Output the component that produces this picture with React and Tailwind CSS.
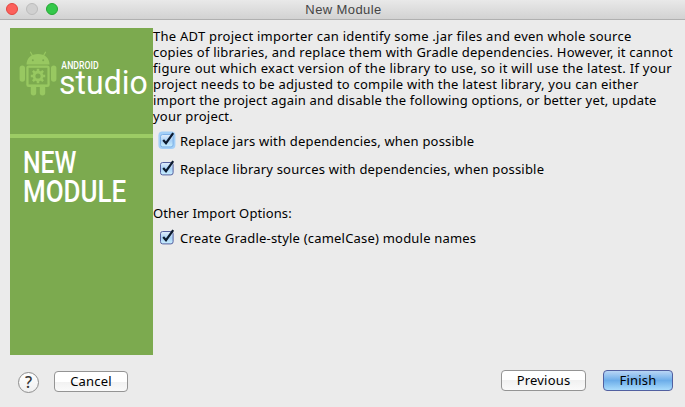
const CheckBox = ({ focused }) => (
  <svg width="17" height="17" viewBox="0 0 17 17" className="block shrink-0 overflow-visible">
    <defs>
      <linearGradient id="cb" x1="0" y1="0" x2="0" y2="1">
        <stop offset="0" stopColor="#e3eefb" />
        <stop offset="0.5" stopColor="#a9d0f5" />
        <stop offset="1" stopColor="#c9f0ff" />
      </linearGradient>
    </defs>
    {focused && <rect x="-0.6" y="-0.4" width="17" height="17.4" rx="4" fill="#a3cff7" />}
    <rect x="1.5" y="2.5" width="12.6" height="12.4" rx="2.2" fill="url(#cb)" stroke={focused ? "#7db0e6" : "#56609f"} />
    <path d="M4.2 8 L7 11.2 L14.2 1.2" fill="none" stroke="#0c1a2e" strokeWidth="2.2" />
  </svg>
);

const Option = ({ focused, className, children }) => (
  <label className="flex h-[17px] items-center pl-[6px]">
    <CheckBox focused={focused} />
    <span className={"ml-[4px] whitespace-nowrap leading-[16px] " + className}>{children}</span>
  </label>
);

const Robot = () => (
  <svg width="38" height="46" viewBox="0 0 38 46" className="block shrink-0" fill="#98c861">
    <path d="M11.5 1.2 L14 5.5 M26.5 1.2 L24 5.5" stroke="#98c861" strokeWidth="1.2" strokeLinecap="round" />
    <path d="M7.5 13.6 C7.5 7 12.5 3 19 3 S30.5 7 30.5 13.6 Z" />
    <circle cx="13.8" cy="9.2" r="1" fill="#7caa4f" />
    <circle cx="24.2" cy="9.2" r="1" fill="#7caa4f" />
    <rect x="0.6" y="14.4" width="5.4" height="16.3" rx="2.7" />
    <rect x="32" y="14.4" width="5.4" height="16.3" rx="2.7" />
    <rect x="7.3" y="14.6" width="23.4" height="21.4" rx="2.2" />
    <rect x="11.8" y="32" width="5.4" height="12.4" rx="2.7" />
    <rect x="20.8" y="32" width="5.4" height="12.4" rx="2.7" />
    <rect x="9.6" y="16.8" width="18.8" height="16.6" fill="#7caa4f" />
    <circle cx="19" cy="25" r="4" fill="none" stroke="#98c861" strokeWidth="2.8" />
    <g stroke="#98c861" strokeWidth="2.5">
      <path d="M19 17.8v3M19 29.2v3M11.8 25h3M23.2 25h3M13.9 19.9l2 2M22.1 28.1l2 2M24.1 19.9l-2 2M15.9 28.1l-2 2" />
    </g>
  </svg>
);

const buttonBase = "flex h-[21px] items-center justify-center rounded-[4px] border text-[13px] leading-[19px] tracking-[0.2px] whitespace-nowrap ";

export default function App() {
  return (
    <div className="flex h-[407px] w-[685px] flex-col overflow-hidden bg-[#ebebeb] font-['Noto_Sans','Open_Sans',sans-serif] text-[13px] text-black">
      <header className="grid h-[20px] shrink-0 grid-cols-[1fr_auto_1fr] items-center border-b border-[#b0b0b0] bg-linear-to-b from-[#e9e9e9] to-[#d2d2d2]">
        <div className="flex gap-[8px] pl-[6px] pb-px">
          <span className="size-[12px] rounded-full border border-[#e2463f] bg-[#fc605b]" />
          <span className="size-[12px] rounded-full border border-[#bcbcbc] bg-[#d0d0d0]" />
          <span className="size-[12px] rounded-full border border-[#24a733] bg-[#34c84a]" />
        </div>
        <h1 className="pl-[2px] font-['Liberation_Sans',Arial,sans-serif] text-[13px] leading-[18px] tracking-[0.4px] text-[#454545]">New Module</h1>
        <div />
      </header>

      <main className="flex h-[335px] shrink-0 pl-[10px] pt-[8px]">
        <aside className="h-[327px] w-[143px] shrink-0 overflow-hidden bg-[#7caa4f] font-[Roboto,sans-serif] text-white">
          <div className="flex h-[106px] pl-[9px] pt-[23px]">
            <Robot />
            <div className="ml-[2px] pt-[8px]">
              <div className="h-[13px] origin-left scale-x-[0.79] whitespace-nowrap pl-[3px] text-[11px] font-medium leading-[13px]">ANDROID</div>
              <div className="h-[32px] origin-left scale-x-[0.97] whitespace-nowrap text-[33px] leading-[21px]">studio</div>
            </div>
          </div>
          <div className="h-[4px] bg-[#9ccc65]" />
          <div className="pl-[13px] pt-[10px] text-[31px] font-medium leading-[29px]">
            <div className="origin-left scale-x-[0.8] whitespace-nowrap">NEW</div>
            <div className="origin-left scale-x-[0.838] whitespace-nowrap">MODULE</div>
          </div>
        </aside>

        <section className="min-w-0 grow whitespace-nowrap">
          <div className="leading-[16px]">
            <div className="tracking-[0.25px]">The ADT project importer can identify some .jar files and even whole source</div>
            <div className="tracking-[0.21px]">copies of libraries, and replace them with Gradle dependencies. However, it cannot</div>
            <div className="tracking-[0.28px]">figure out which exact version of the library to use, so it will use the latest. If your</div>
            <div className="tracking-[0.23px]">project needs to be adjusted to compile with the latest library, you can either</div>
            <div className="tracking-[0.2px]">import the project again and disable the following options, or better yet, update</div>
            <div className="tracking-[0.2px]">your project.</div>
          </div>
          <div className="mt-[8px] flex flex-col gap-[11px]">
            <Option focused className="tracking-[0.19px]">Replace jars with dependencies, when possible</Option>
            <Option className="tracking-[0.2px]">Replace library sources with dependencies, when possible</Option>
          </div>
          <div className="mt-[28px] leading-[16px] tracking-[0.1px]">Other Import Options:</div>
          <div className="mt-[8px]">
            <Option className="tracking-[0.2px]">Create Gradle-style (camelCase) module names</Option>
          </div>
        </section>
      </main>

      <footer className="flex grow items-start justify-between pl-[18px] pr-[12px] pt-[15px]">
        <div className="flex pt-px">
          <button className="mt-px flex size-[21px] items-center justify-center rounded-full border border-[#8e8e8e] bg-linear-to-b from-white to-[#f0f0f0] text-[16px] font-medium leading-[19px] text-[#333]">?</button>
          <button className={buttonBase + "ml-[15px] w-[74px] border-[#949494] bg-linear-to-b from-white from-50% via-[#f1f1f1] via-50% to-[#fafafa]"}>Cancel</button>
        </div>
        <div className="flex gap-[17px]">
          <button className={buttonBase + "w-[85px] border-[#949494] bg-linear-to-b from-white from-50% via-[#f1f1f1] via-50% to-[#fafafa]"}>Previous</button>
          <button className={buttonBase + "w-[70px] border-[#5260a0] bg-linear-to-b from-[#b9d6f5] via-[#6cade9] via-50% to-[#a9dcfc]"}>Finish</button>
        </div>
      </footer>
    </div>
  );
}
